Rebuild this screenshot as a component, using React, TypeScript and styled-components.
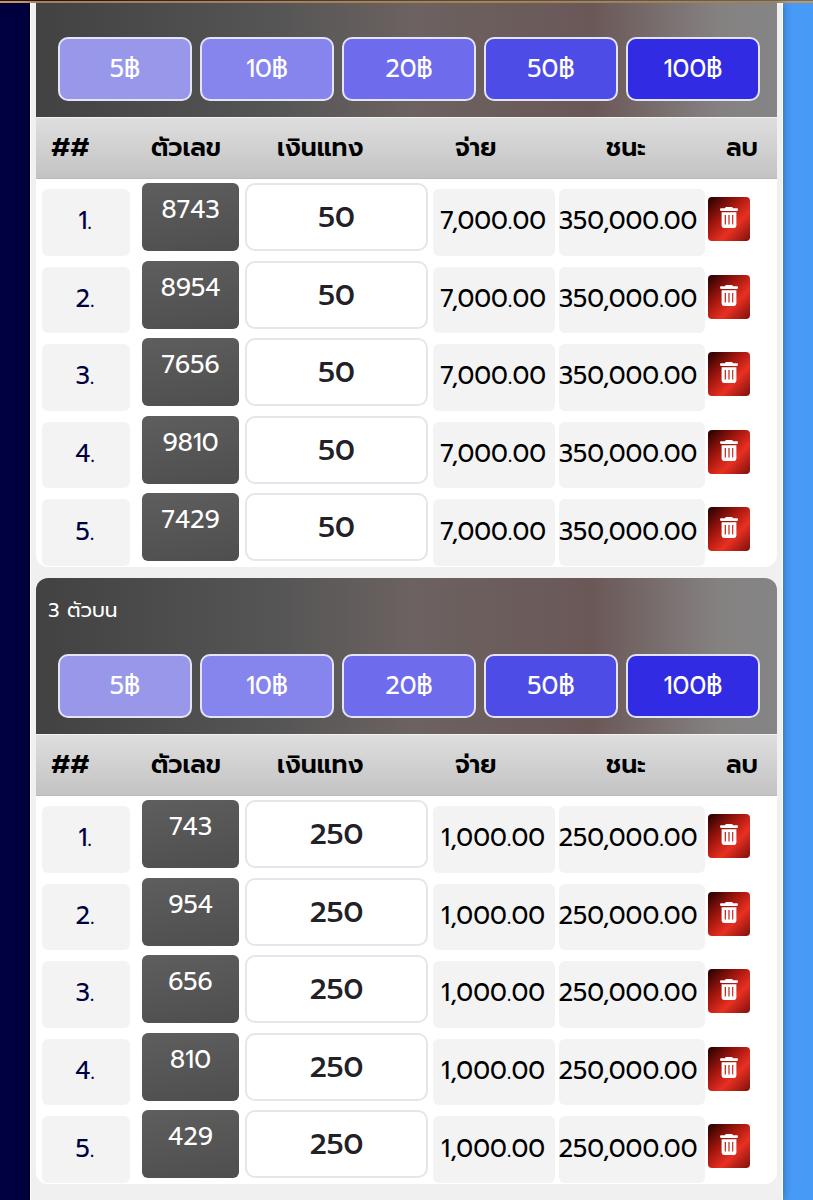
import React from "react";
import styled, { createGlobalStyle } from "styled-components";

const GlobalStyle = createGlobalStyle`
  *, *::before, *::after { box-sizing: border-box; }
  body {
    margin: 0;
    background: linear-gradient(90deg, #00003f 50%, #479af6 50%);
    font-family: Prompt, Inter, "Noto Sans", "Noto Sans Thai", "Open Sans", sans-serif;
    color: #000;
  }
  button, input { font-family: inherit; }
`;

const TopBar = styled.header`
  height: 3px;
  background: linear-gradient(90deg, #1c1020, #4c4d57 45%, #5f7587);
  border-bottom: 2px solid #c99659;
`;

const Page = styled.main`
  display: flex;
  flex-direction: column;
  gap: 11px;
  min-height: calc(100vh - 3px);
  margin: 0 30px;
  padding: 0 5px 12px;
  background: #f0f0f0;
  border: 0 solid #fff;
  border-width: 0 1px;
  box-shadow: 0 0 8px rgba(0, 0, 0, 0.35);
`;

const Panel = styled.section<{ $continued?: boolean }>`
  overflow: hidden;
  border-radius: ${(p) => (p.$continued ? "0 0 12px 12px" : "12px")};
  background: #fff;
`;

const PanelHead = styled.div`
  padding: 0 17px 16px 22px;
  background: linear-gradient(90deg, #424242 0%, #555 32%, #6c6261 51%, #6a5857 75%, #858181 92%, #858585 100%);
`;

const Title = styled.h2`
  height: 76px;
  margin: 0 0 0 -10px;
  padding-top: 12px;
  color: #fff;
  font-size: 20px;
  font-weight: 400;
  line-height: 40px;
`;

const Stakes = styled.div<{ $spaced?: boolean }>`
  display: grid;
  grid-template-columns: repeat(5, 1fr);
  gap: 8px;
  padding-top: ${(p) => (p.$spaced ? "34px" : "0")};
`;

const StakeButton = styled.button<{ $color: string }>`
  height: 64px;
  padding: 0;
  border: 2px solid #e4e4f8;
  border-radius: 10px;
  background: ${(p) => p.$color};
  color: #fff;
  font-size: 25px;
  font-weight: 400;
  line-height: 32px;
`;

const Table = styled.table`
  display: block;
`;

const Head = styled.thead`
  display: block;
`;

const HeadRow = styled.tr`
  display: grid;
  grid-template-columns: 100fr 126fr 178fr 151fr 120fr 66fr;
  align-items: center;
  height: 62px;
  border-top: 1px solid #f2f2f2;
  border-bottom: 1px solid #b9b9b9;
  background: linear-gradient(#dedede, #c3c3c3);
`;

const HeadCell = styled.th`
  padding: 0 0 0 15px;
  text-align: left;
  font-size: 25px;
  font-weight: 600;
  line-height: 32px;
  white-space: nowrap;
`;

const Body = styled.tbody`
  display: grid;
  grid-auto-rows: 1fr;
  height: 388px;
`;

const Row = styled.tr`
  display: grid;
  grid-template-columns: 94fr 109fr 188fr 126fr 148fr 70fr;
  padding-left: 6px;
`;

const Cell = styled.td`
  display: flex;
  min-width: 0;
  padding: 0;
`;

const SoftBox = styled.div<{ $ink?: string; $gap?: number; $inset?: number }>`
  flex: 1;
  display: flex;
  align-items: center;
  justify-content: center;
  min-width: 0;
  margin: 10px ${(p) => p.$gap ?? 4}px 1px 0;
  padding: 0 ${(p) => p.$inset ?? 2}px 2px 0;
  border-radius: 6px;
  background: #f3f3f3;
  color: ${(p) => p.$ink ?? "#000"};
  font-size: 25px;
  font-weight: 400;
  line-height: 32px;
  white-space: nowrap;
`;

const NumberBox = styled.div`
  flex: 1;
  height: 68px;
  margin: 4px 6px 0;
  padding-top: 11px;
  border-radius: 6px;
  background: linear-gradient(170deg, #5e5e5e, #4e4e4e);
  color: #fff;
  text-align: center;
  font-size: 25px;
  font-weight: 400;
  line-height: 32px;
`;

const AmountInput = styled.input`
  flex: 1;
  min-width: 0;
  height: 68px;
  margin: 4px 5px 0 0;
  padding: 0;
  border: 2px solid #e5e5ec;
  border-radius: 10px;
  background: #fff;
  color: #212127;
  text-align: center;
  font-size: 29px;
  font-weight: 500;
`;

const DeleteButton = styled.button`
  display: flex;
  justify-content: center;
  width: 42px;
  height: 44px;
  margin: 18px 0 0 1px;
  padding: 10px 0 0;
  border: 0;
  border-radius: 4px;
  background: linear-gradient(135deg, #200000 0%, #a3160e 38%, #e83022 65%, #7d100a 100%);
`;

const TrashIcon = () => (
  <svg width="18" height="21" viewBox="0 0 18 21" aria-hidden="true">
    <path
      fill="#fff"
      fillRule="evenodd"
      d="M5 1.2Q5.3 0 6.5 0h5q1.2 0 1.5 1.2h4q1 0 1 1.4T17 4H1Q0 4 0 2.6T1 1.2ZM1.6 5.2h14.8V18.600q0 2.400-2.200 2.400H3.800q-2.200 0-2.200-2.400ZM4.700 8v9.600h1.200V8ZM8.400 8v9.600h1.200V8ZM12.100 8v9.600h1.200V8Z"
    />
  </svg>
);

const stakes = [
  { value: 5, color: "#9997ea" },
  { value: 10, color: "#8684ed" },
  { value: 20, color: "#6e6cec" },
  { value: 50, color: "#4e4ce7" },
  { value: 100, color: "#312ce3" },
];

const headings = ["##", "ตัวเลข", "เงินแทง", "จ่าย", "ชนะ", "ลบ"];

type BetPanelProps = {
  title?: string;
  numbers: string[];
  amount: string;
  rate: string;
  win: string;
};

function BetPanel({ title, numbers, amount, rate, win }: BetPanelProps) {
  return (
    <Panel $continued={!title}>
      <PanelHead>
        {title && <Title>{title}</Title>}
        <Stakes $spaced={!title}>
          {stakes.map((s) => (
            <StakeButton key={s.value} type="button" $color={s.color}>
              {s.value}฿
            </StakeButton>
          ))}
        </Stakes>
      </PanelHead>
      <Table>
        <Head>
          <HeadRow>
            {headings.map((h) => (
              <HeadCell key={h} scope="col">{h}</HeadCell>
            ))}
          </HeadRow>
        </Head>
        <Body>
          {numbers.map((n, i) => (
            <Row key={n}>
              <Cell><SoftBox $ink="#00003f" $gap={6}>{i + 1}.</SoftBox></Cell>
              <Cell><NumberBox>{n}</NumberBox></Cell>
              <Cell><AmountInput aria-label={`เงินแทง ${n}`} defaultValue={amount} inputMode="numeric" /></Cell>
              <Cell><SoftBox>{rate}</SoftBox></Cell>
              <Cell><SoftBox $gap={2} $inset={8}>{win}</SoftBox></Cell>
              <Cell>
                <DeleteButton type="button" aria-label={`ลบ ${n}`}>
                  <TrashIcon />
                </DeleteButton>
              </Cell>
            </Row>
          ))}
        </Body>
      </Table>
    </Panel>
  );
}

export default function App() {
  return (
    <>
      <GlobalStyle />
      <TopBar />
      <Page>
        <BetPanel
          numbers={["8743", "8954", "7656", "9810", "7429"]}
          amount="50"
          rate="7,000.00"
          win="350,000.00"
        />
        <BetPanel
          title="3 ตัวบน"
          numbers={["743", "954", "656", "810", "429"]}
          amount="250"
          rate="1,000.00"
          win="250,000.00"
        />
      </Page>
    </>
  );
}
